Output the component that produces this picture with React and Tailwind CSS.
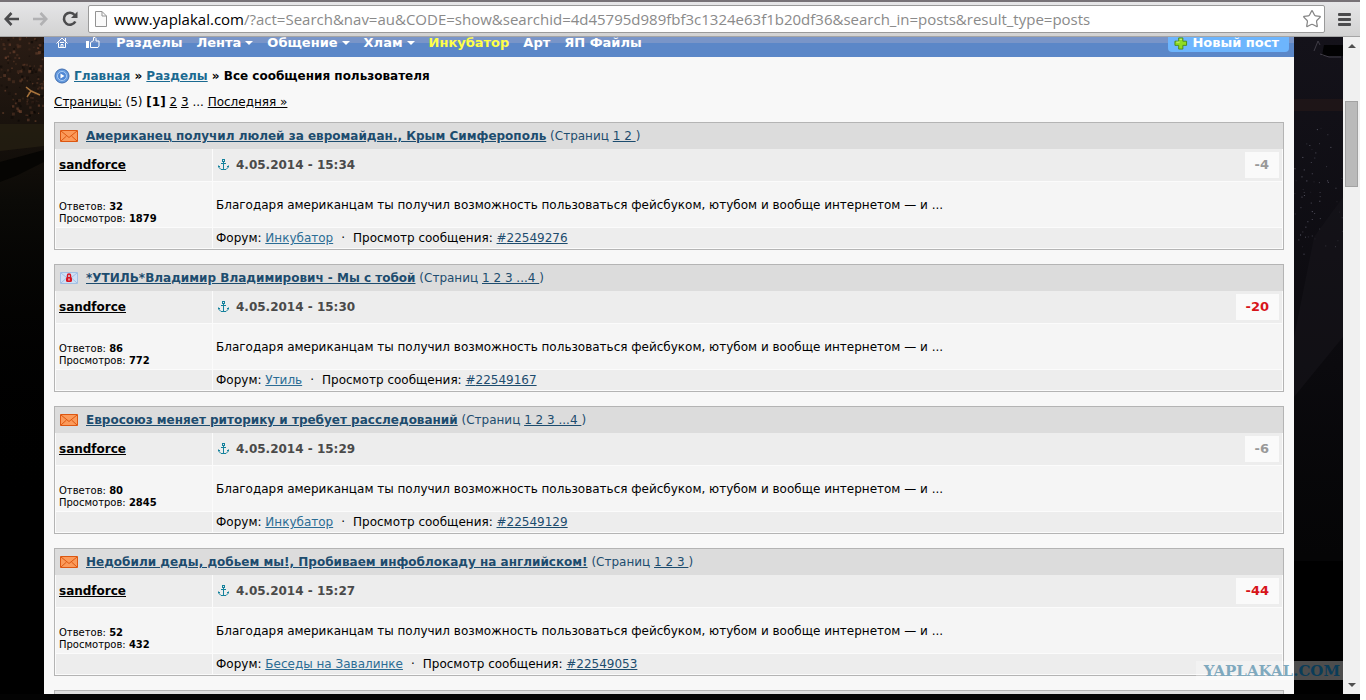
import React from 'react';
import { Star } from 'lucide-react';

const URL_HOST = 'www.yaplakal.com';
const URL_PATH = '/?act=Search&nav=au&CODE=show&searchid=4d45795d989fbf3c1324e63f1b20df36&search_in=posts&result_type=posts';

const POSTS = [
  { id: '22549276', title: 'Американец получил люлей за евромайдан., Крым Симферополь', pages: '1 2 ', time: '4.05.2014 - 15:34', score: -4, replies: 32, views: 1879, forum: 'Инкубатор' },
  { id: '22549167', title: '*УТИЛЬ*Владимир Владимирович - Мы с тобой', pages: '1 2 3 ...4 ', time: '4.05.2014 - 15:30', score: -20, replies: 86, views: 772, forum: 'Утиль', locked: true },
  { id: '22549129', title: 'Евросоюз меняет риторику и требует расследований', pages: '1 2 3 ...4 ', time: '4.05.2014 - 15:29', score: -6, replies: 80, views: 2845, forum: 'Инкубатор' },
  { id: '22549053', title: 'Недобили деды, добьем мы!, Пробиваем инфоблокаду на английском!', pages: '1 2 3 ', time: '4.05.2014 - 15:27', score: -44, replies: 52, views: 432, forum: 'Беседы на Завалинке' },
];

const EXCERPT = 'Благодаря американцам ты получил возможность пользоваться фейсбуком, ютубом и вообще интернетом — и ...';

// Scattered light specks for the dark side photos, same pattern every render.
const specks = (count, height, seed) => {
  let s = seed;
  const next = () => { s = (s * 16807) % 2147483647; return s / 2147483647; };
  return Array.from({ length: count }, () => ({ x: next() * 49, y: next() * height, r: 1 + next() * 2, o: 0.15 + next() * 0.5 }));
};
const LEFT_SPECKS = specks(190, 84, 71);
const RIGHT_SPECKS = specks(60, 130, 1234);

export default function App() {
  return (
    <div className="bg-white pr-1.5">
      <div className="relative h-screen overflow-hidden flex flex-col bg-[#030303] text-xs leading-4 text-black font-['DejaVu_Sans',Verdana,sans-serif]">
        <BrowserBar />
        <div className="flex-1 min-h-0 flex mb-1.5">
          <LeftPhoto />
          <main className="flex-1 min-w-0 overflow-hidden bg-[#f8f8f8]">
            <NavBar />
            <div className="px-2.5">
              <Breadcrumbs />
              <Pager />
              <div className="flex flex-col gap-3.5">
                {POSTS.map((p) => <PostCard key={p.id} post={p} />)}
                <div className="h-8 border border-[#b4b4b4] bg-[#dcdcdc]" />
              </div>
            </div>
          </main>
          <RightPhoto />
          <ScrollBar />
        </div>
        <Watermark />
      </div>
    </div>
  );
}

function BrowserBar() {
  return (
    <header className="h-[37px] shrink-0 flex items-center pl-1 pr-[9px] border-t-2 border-[#777277] border-b border-b-[#a5a5a5] bg-linear-to-b from-[#e6e6e8] to-[#d2d2d2]">
      <button aria-label="Назад" className="text-[#4b4b4d]"><BackArrow /></button>
      <button aria-label="Вперёд" className="ml-3.5 -scale-x-100 text-[#b1b1b3]"><BackArrow /></button>
      <button aria-label="Обновить" className="ml-3.5 text-[#4b4b4d]"><ReloadIcon /></button>
      <div className="ml-2.5 h-7 flex-1 min-w-0 flex items-center rounded-xs border border-[#9a9a9a] bg-white pl-1.5 pr-0.5 font-['Open_Sans',sans-serif] text-[15px] leading-5">
        <PageIcon />
        <a href="#url" className="ml-[7px] flex-1 min-w-0 truncate text-[#8a8a8a]"><span className="text-black">{URL_HOST}</span>{URL_PATH}</a>
        <button aria-label="В закладки" className="text-[#858585]"><Star size={20} strokeWidth={1.5} /></button>
      </div>
      <button aria-label="Меню" className="ml-[13px] text-[#4b4b4d]">
        <svg width="13" height="13" viewBox="0 0 13 13" fill="currentColor">
          <rect width="13" height="3" rx="1" /><rect y="5" width="13" height="3" rx="1" /><rect y="10" width="13" height="3" rx="1" />
        </svg>
      </button>
    </header>
  );
}

function BackArrow() {
  return (
    <svg width="15" height="14" viewBox="0 0 15 14" fill="none" stroke="currentColor" strokeWidth="2.6">
      <path d="M7.500 1L1.800 7l5.700 6M2 7h13" />
    </svg>
  );
}

function ReloadIcon() {
  return (
    <svg width="16" height="16" viewBox="0 0 16 16" fill="none" stroke="currentColor" strokeWidth="2.6">
      <path d="M12.600 4A6 6 0 1 0 13.300 10.500" />
      <path d="M15.500 .5v6.500H9z" fill="currentColor" stroke="none" />
    </svg>
  );
}

function PageIcon() {
  return (
    <svg width="12" height="16" viewBox="0 0 12 16" className="shrink-0" fill="#fafafa" stroke="#939393">
      <path d="M.5 .5h6.500l4.500 4.500v10.500h-11z M7 .5v4.500h4.500" />
    </svg>
  );
}

function LeftPhoto() {
  return (
    <div className="w-11 shrink-0 bg-linear-to-b from-[#2a1c14] via-[#0b0a07] via-25% to-black to-75%">
      <svg width="44" height="300" viewBox="0 0 44 300" aria-hidden="true">
        {LEFT_SPECKS.map((s, i) => (
          <rect key={i} x={s.x} y={s.y} width={s.r} height={s.r} fill={i % 3 ? '#7a4a33' : '#080503'} opacity={s.o} />
        ))}
        <path d="M26 50l5 4-4 6M31 54l9 4" fill="none" stroke="#a8743c" strokeWidth="1.500" />
        <path d="M0 87h44v22L0 114z" fill="#272113" opacity=".7" />
        <path d="M44 125L18 138 0 145v-20l44-12z" fill="#060503" />
      </svg>
    </div>
  );
}

function RightPhoto() {
  return (
    <div className="w-[49px] shrink-0 bg-linear-to-b from-[#14121a] via-[#0b0a0e] via-50% to-[#050506] to-79%">
      <svg width="49" height="657" viewBox="0 0 49 657" aria-hidden="true">
        <path d="M0 62h49v12H0z" fill="#2a1a18" opacity=".5" />
        <path d="M30 8h19v11H28z" fill="#020203" />
        <path d="M20 14l4-10 2 4M26 17l9 3h12" fill="none" stroke="#3f3c46" />
        {RIGHT_SPECKS.map((s, i) => (
          <rect key={i} x={s.x} y={90 + s.y} width="1" height="1" fill="#8d8ca0" opacity={s.o} />
        ))}
        <path d="M49 160L20 200 0 300v60l49-60z" fill="#17161b" opacity=".5" />
        <path d="M0 524h49v133H0z" fill="#000" />
      </svg>
    </div>
  );
}

function NavBar() {
  return (
    <nav className="h-5 flex items-start justify-between pl-3 pr-[5px] bg-linear-to-b from-[#7995c8] from-30% to-[#5b87c8] to-30% text-white text-[13px] leading-3 font-bold">
      <div className="flex items-start">
        <a href="#home" aria-label="Домой"><HomeIcon /></a>
        <a href="#top" aria-label="Лучшее" className="ml-[18px]"><ThumbIcon /></a>
        <a href="#sections" className="ml-4">Разделы</a>
        <NavMenu>Лента</NavMenu>
        <NavMenu>Общение</NavMenu>
        <NavMenu>Хлам</NavMenu>
        <a href="#incubator" className="ml-3.5 text-[#ffff48]">Инкубатор</a>
        <a href="#art" className="ml-3.5">Арт</a>
        <a href="#files" className="ml-3.5">ЯП Файлы</a>
      </div>
      <button className="h-[15px] flex items-start rounded-b-sm bg-[#6db5fd] pl-1.5 pr-2.5 font-bold">
        <PlusIcon />
        <span className="ml-1">Новый пост</span>
      </button>
    </nav>
  );
}

function NavMenu({ children }) {
  return (
    <a href="#menu" className="ml-3.5 flex items-center">
      {children}
      <svg width="8" height="4" viewBox="0 0 8 4" className="ml-1" fill="currentColor"><path d="M0 0h8L4 4z" /></svg>
    </a>
  );
}

function HomeIcon() {
  return (
    <svg width="12" height="12" viewBox="0 0 12 12" fill="none" stroke="white">
      <path d="M.5 6.500L6 1l5.500 5.500M2.500 5.500v5h7v-5M5 10.500v-3h2v3M9.500 1v3M4 5.500h4" />
    </svg>
  );
}

function ThumbIcon() {
  return (
    <svg width="14" height="12" viewBox="0 0 14 12" fill="none" stroke="white">
      <path d="M4.500 10.500V5.500l3-2V.5h1.500l1 1v2.500h3v5l-1 1.500z" />
      <path d="M0 4h3v7H0z" fill="white" stroke="none" />
    </svg>
  );
}

function PlusIcon() {
  return (
    <svg width="14" height="13" viewBox="0 0 14 14">
      <path d="M4.500 1h4.500v3.500h4v4.500H9v4H4.500V9h-4V4.500h4z" fill="#8fdb22" stroke="#4b8a12" />
      <path d="M5.500 2.500h2.500M2 5.500h3.500" stroke="#d7f58a" />
    </svg>
  );
}

function Breadcrumbs() {
  return (
    <div className="pt-[11px] flex items-center font-bold">
      <svg width="16" height="16" viewBox="0 0 16 16">
        <circle cx="8" cy="8" r="7" fill="#659bdf" stroke="#3f6cae" />
        <circle cx="8" cy="8" r="4.500" fill="#4e86d4" stroke="#a9cbf3" />
        <path d="M6.500 5.500l4 2.500-4 2.500z" fill="white" />
      </svg>
      <p className="ml-1">
        <a href="#main" className="text-[#1b6a91] underline">Главная</a> » <a href="#sections" className="text-[#1b6a91] underline">Разделы</a> » Все сообщения пользователя
      </p>
    </div>
  );
}

function Pager() {
  return (
    <p className="mt-2.5 mb-3">
      <a href="#pages" className="underline">Страницы:</a> (5) <b>[1]</b> <a href="#p2" className="underline">2</a> <a href="#p3" className="underline">3</a> ... <a href="#last" className="underline">Последняя »</a>
    </p>
  );
}

function PostCard({ post }) {
  const high = post.score <= -10;
  return (
    <article className="border border-[#b4b4b4] bg-[#fbfbfb]">
      <h2 className="h-[26px] flex items-center bg-[#dcdcdc] pl-[5px] text-[#1d4c6e]">
        {post.locked ? <LockedIcon /> : <MailIcon />}
        <span className="ml-2 whitespace-pre">
          <a href="#topic" className="font-bold underline">{post.title}</a> (Страниц <a href="#page" className="underline">{post.pages}</a>)
        </span>
      </h2>
      <table className="w-full table-fixed border-separate border-spacing-px -mt-px">
        <colgroup>
          <col className="w-[156px]" />
          <col />
        </colgroup>
        <tbody>
          <tr className="h-8 bg-[#ededed]">
            <td className="px-[3px]"><a href="#user" className="font-bold underline">sandforce</a></td>
            <td className="pl-[5px] pr-[3px]">
              <div className="flex items-center text-[#4a4a4a] font-bold">
                <AnchorIcon />
                <span className="ml-[7px] flex-1">{post.time}</span>
                <span className={`h-[26px] px-2.5 flex items-center bg-[#fafafa] text-[13px] ${high ? 'text-[#d7141a]' : 'text-[#999]'}`}>{post.score}</span>
              </div>
            </td>
          </tr>
          <tr className="h-[45px] bg-[#f5f5f5]">
            <td className="px-[3px] pb-0.5 align-bottom text-[10px] leading-3">
              <div>Ответов: <b>{post.replies}</b></div>
              <div>Просмотров: <b>{post.views}</b></div>
            </td>
            <td className="px-[3px]">{EXCERPT}</td>
          </tr>
          <tr className="h-5 bg-[#ededed]">
            <td />
            <td className="px-[3px]">
              Форум: <a href="#forum" className="text-[#2b6c94] underline">{post.forum}</a>
              <span className="mx-2">·</span>
              Просмотр сообщения: <a href="#post" className="text-[#1d4c6e] underline">#{post.id}</a>
            </td>
          </tr>
        </tbody>
      </table>
    </article>
  );
}

function MailIcon() {
  return (
    <svg width="18" height="12" viewBox="0 0 18 12" fill="#fb9a5a" stroke="#dd5711">
      <path d="M.5 .5h17v11H.5z" />
      <path d="M1 1l8 6.500L17 1M1 11l5.500-5M17 11l-5.500-5" fill="none" />
    </svg>
  );
}

function LockedIcon() {
  return (
    <svg width="18" height="12" viewBox="0 0 18 12">
      <path d="M.5 .5h17v11H.5z" fill="#cfe0f4" stroke="#a3c0e4" />
      <path d="M1 1l8 6.500L17 1M1 11l5.500-5M17 11l-5.500-5" fill="none" stroke="#a3c0e4" />
      <path d="M7.500 5.500V3.500a1.500 1.500 0 0 1 3 0v2" fill="none" stroke="#d81420" strokeWidth="1.500" />
      <rect x="6" y="5" width="6" height="5" rx="1.500" fill="#d81420" />
      <path d="M9 6.500v2" stroke="white" />
    </svg>
  );
}

function AnchorIcon() {
  return (
    <svg width="11" height="12" viewBox="0 0 11 12" fill="none" stroke="#14819c">
      <rect x="4.500" y=".5" width="2" height="2" />
      <path d="M5.500 3v8M3 4.500h5M.5 6.500v1.500l2.500 2.500h5l2.500-2.500V6.500M0 7.500h2M9 7.500h2" />
    </svg>
  );
}

function ScrollBar() {
  return (
    <div className="w-[17px] shrink-0 flex flex-col items-center bg-[#f0f0f0] py-[7px]" aria-hidden="true">
      <svg width="8" height="4" viewBox="0 0 8 4" fill="#505050"><path d="M0 4h8L4 0z" /></svg>
      <div className="mt-[53px] h-[86px] w-[13px] border border-[#a2a2a2] bg-[#bababa]" />
      <svg width="8" height="4" viewBox="0 0 8 4" className="mt-auto" fill="#505050"><path d="M0 0h8L4 4z" /></svg>
    </div>
  );
}

function Watermark() {
  return (
    <div className="absolute right-4 bottom-5 h-[19px] flex items-center bg-white/30 pl-2 pr-1 font-['DejaVu_Serif',serif] text-[15px] leading-4 font-bold">
      <span className="text-[#7fa9be]">YAPLAKAL</span><span className="text-[#0a3c58]">.COM</span>
    </div>
  );
}
